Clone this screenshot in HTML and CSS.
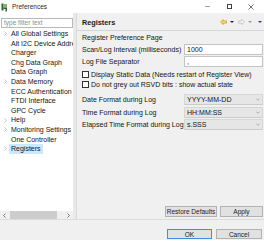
FILE: index.html
```html
<!DOCTYPE html>
<html>
<head>
<meta charset="utf-8">
<title>Preferences</title>
<link rel="stylesheet" href="styles.css">
</head>
<body>
<div class="window">
  <div class="titlebar">
    <svg class="app-icon" viewBox="0 0 7 9" width="7" height="9">
      <rect x="0.5" y="0.5" width="2" height="7" fill="#2e5e46"/>
      <rect x="2.5" y="1" width="3.5" height="3.5" fill="#86b852"/>
      <path d="M2.5 4.5 L6 4.5 L6 8.5 L4.5 8.5 L4.5 6 L2.5 6 Z" fill="#2e5e46"/>
    </svg>
    <span class="title">Preferences</span>
    <div class="controls">
      <span class="ctl"><span class="min"></span></span>
      <span class="ctl"><span class="max"></span></span>
      <span class="ctl">
        <svg viewBox="0 0 6 6" width="6" height="6"><path d="M0.5 0.5 L5.5 5.5 M5.5 0.5 L0.5 5.5" stroke="#333" stroke-width="0.7"/></svg>
      </span>
    </div>
  </div>

  <div class="main">
    <div class="left">
      <div class="filter">type filter text</div>
      <ul class="tree">
        <li><span class="exp"><svg viewBox="0 0 3 5" width="3" height="5"><path d="M0.5 0.5 L2.5 2.5 L0.5 4.5" fill="none" stroke="#a6a6a6" stroke-width="0.7"/></svg></span><span class="label">All Global Settings</span></li>
        <li><span class="exp"></span><span class="label">Alt I2C Device Address</span></li>
        <li><span class="exp"></span><span class="label">Charger</span></li>
        <li><span class="exp"></span><span class="label">Chg Data Graph</span></li>
        <li><span class="exp"></span><span class="label">Data Graph</span></li>
        <li><span class="exp"><svg viewBox="0 0 3 5" width="3" height="5"><path d="M0.5 0.5 L2.5 2.5 L0.5 4.5" fill="none" stroke="#a6a6a6" stroke-width="0.7"/></svg></span><span class="label">Data Memory</span></li>
        <li><span class="exp"></span><span class="label">ECC Authentication</span></li>
        <li><span class="exp"></span><span class="label">FTDI Interface</span></li>
        <li><span class="exp"></span><span class="label">GPC Cycle</span></li>
        <li><span class="exp"><svg viewBox="0 0 3 5" width="3" height="5"><path d="M0.5 0.5 L2.5 2.5 L0.5 4.5" fill="none" stroke="#a6a6a6" stroke-width="0.7"/></svg></span><span class="label">Help</span></li>
        <li><span class="exp"><svg viewBox="0 0 3 5" width="3" height="5"><path d="M0.5 0.5 L2.5 2.5 L0.5 4.5" fill="none" stroke="#a6a6a6" stroke-width="0.7"/></svg></span><span class="label">Monitoring Settings</span></li>
        <li><span class="exp"></span><span class="label">One Controller</span></li>
        <li><span class="exp"><svg viewBox="0 0 3 5" width="3" height="5"><path d="M0.5 0.5 L2.5 2.5 L0.5 4.5" fill="none" stroke="#a6a6a6" stroke-width="0.7"/></svg></span><span class="label selected">Registers</span></li>
      </ul>
      <div class="hscroll">
        <span class="sarrow"><svg viewBox="0 0 3 5" width="3" height="5"><path d="M2.5 0.5 L0.5 2.5 L2.5 4.5" fill="none" stroke="#606060" stroke-width="0.8"/></svg></span>
        <div class="track"><div class="thumb"></div></div>
        <span class="sarrow"><svg viewBox="0 0 3 5" width="3" height="5"><path d="M0.5 0.5 L2.5 2.5 L0.5 4.5" fill="none" stroke="#606060" stroke-width="0.8"/></svg></span>
      </div>
    </div>
    <div class="sash"></div>
    <div class="right">
      <div class="header">
        <span class="htitle">Registers</span>
        <div class="nav">
          <svg viewBox="0 0 7 6" width="7" height="6"><polygon points="0.5,3 3.3,0.5 3.3,1.9 6.5,1.9 6.5,4.1 3.3,4.1 3.3,5.5" fill="#fbd964" stroke="#cf9a17" stroke-width="0.7"/></svg>
          <svg class="drop" viewBox="0 0 4 2" width="4" height="2"><polygon points="0,0 4,0 2,2" fill="#222"/></svg>
          <svg viewBox="0 0 7 6" width="7" height="6"><polygon points="6.5,3 3.7,0.5 3.7,1.9 0.5,1.9 0.5,4.1 3.7,4.1 3.7,5.5" fill="#fafafa" stroke="#b5b5b5" stroke-width="0.7"/></svg>
          <svg class="drop" viewBox="0 0 4 2" width="4" height="2"><polygon points="0,0 4,0 2,2" fill="#9a9a9a"/></svg>
          <svg class="drop menu" viewBox="0 0 4 2" width="4" height="2"><polygon points="0,0 4,0 2,2" fill="#4b2a86"/></svg>
        </div>
      </div>
      <div class="content">
        <div class="desc">Register Preference Page</div>
        <div class="row r-scan"><span class="lbl">Scan/Log Interval (milliseconds)</span><div class="text">1000</div></div>
        <div class="row r-sep"><span class="lbl">Log File Separator</span><div class="text">,</div></div>
        <div class="check c-first"><span class="box"></span><span>Display Static Data (Needs restart of Register View)</span></div>
        <div class="check"><span class="box"></span><span>Do not grey out RSVD bits : show actual state</span></div>
        <div class="row r-combo first-combo"><span class="lbl">Date Format during Log</span><div class="combo"><span>YYYY-MM-DD</span><svg viewBox="0 0 4 2.5" width="4" height="3"><path d="M0.3 0.3 L2 2 L3.7 0.3" fill="none" stroke="#8a8a8a" stroke-width="0.6"/></svg></div></div>
        <div class="row r-combo"><span class="lbl">Time Format during Log</span><div class="combo"><span>HH:MM:SS</span><svg viewBox="0 0 4 2.5" width="4" height="3"><path d="M0.3 0.3 L2 2 L3.7 0.3" fill="none" stroke="#8a8a8a" stroke-width="0.6"/></svg></div></div>
        <div class="row r-combo"><span class="lbl">Elapsed Time Format during Log</span><div class="combo"><span>s.SSS</span><svg viewBox="0 0 4 2.5" width="4" height="3"><path d="M0.3 0.3 L2 2 L3.7 0.3" fill="none" stroke="#8a8a8a" stroke-width="0.6"/></svg></div></div>
      </div>
      <div class="page-buttons">
        <button class="btn restore">Restore Defaults</button>
        <button class="btn apply">Apply</button>
      </div>
    </div>
  </div>

  <div class="footer">
    <button class="btn ok">OK</button>
    <button class="btn cancel">Cancel</button>
  </div>
</div>
</body>
</html>
```

FILE: styles.css
```css
* { box-sizing: border-box; margin: 0; padding: 0; }

html, body {
  width: 264px;
  height: 240px;
  overflow: hidden;
}

body {
  font-family: "Liberation Sans", Arial, sans-serif;
  font-size: 7px;
  color: #141414;
  background: #f0f0f0;
}

.window {
  width: 264px;
  height: 240px;
  display: flex;
  flex-direction: column;
}

/* title bar */
.titlebar {
  height: 13px;
  flex: none;
  background: #ffffff;
  display: flex;
  align-items: center;
  padding-left: 1px;
}
.app-icon { display: block; margin-right: 4px; margin-top: 1px; }
.title { font-size: 6.5px; color: #2a2a2a; }
.controls {
  margin-left: auto;
  display: flex;
  height: 13px;
  padding-right: 2px;
}
.ctl {
  width: 22px;
  height: 13px;
  display: flex;
  align-items: center;
  justify-content: center;
}
.min { display: block; width: 5px; height: 1px; background: #a0a0a0; }
.max { display: block; width: 5px; height: 5px; border: 0.8px solid #444; }

/* main area */
.main {
  height: 206px;
  flex: none;
  display: flex;
}

.left {
  width: 73px;
  background: #ffffff;
  display: flex;
  flex-direction: column;
}
.filter {
  margin: 5px 0 0 1px;
  width: 72px;
  height: 10px;
  border: 1px solid #b9b9b9;
  padding-left: 2px;
  font-size: 6.5px;
  line-height: 8px;
  color: #8d8d8d;
  white-space: nowrap;
  overflow: hidden;
}
.tree {
  list-style: none;
  margin-top: 1px;
}
.tree li {
  height: 9.6px;
  line-height: 9.6px;
  display: flex;
  align-items: center;
  white-space: nowrap;
  overflow: hidden;
}
.exp {
  width: 11px;
  flex: none;
  display: flex;
  padding-left: 4px;
  align-items: center;
}
.exp svg { display: block; }
.label { padding: 0 2px; margin-left: -2px; }
.label.selected { background: #cce8ff; }

.hscroll {
  margin-top: auto;
  height: 8px;
  display: flex;
  align-items: center;
  background: #f0f0f0;
}
.sarrow {
  width: 9px;
  height: 8px;
  flex: none;
  display: flex;
  align-items: center;
  justify-content: center;
}
.sarrow svg { display: block; }
.track { flex: 1; height: 8px; }
.thumb { margin-left: 1px; width: 47px; height: 8px; background: #cdcdcd; }

.sash {
  width: 3px;
  flex: none;
  background: #e9e9e9;
}

.right {
  flex: 1;
  display: flex;
  flex-direction: column;
  border-left: 1px solid #dadada;
}

.header {
  margin-top: 2px;
  height: 16px;
  flex: none;
  display: flex;
  align-items: center;
  padding-left: 5px;
  border-bottom: 1px solid #d5d5d5;
}
.htitle { font-weight: bold; font-size: 7.3px; color: #1a1a1a; }
.nav {
  margin-left: auto;
  display: flex;
  align-items: center;
  padding-right: 2px;
  margin-top: -2px;
}
.nav svg { display: block; }
.nav .drop { margin: 1px 4px 0 3px; }
.nav .menu { margin-left: 2px; margin-right: 0; }

.content {
  padding-left: 5px;
  padding-right: 1px;
}
.desc {
  margin-top: 1px;
  height: 11px;
  line-height: 11px;
}
.row {
  display: flex;
  align-items: center;
  height: 11px;
}
.r-scan { margin-top: 1px; }
.r-sep { margin-top: 1px; }
.lbl {
  width: 102px;
  flex: none;
  white-space: nowrap;
}
.text {
  flex: 1;
  height: 11px;
  background: #ffffff;
  border: 1px solid #c4c4c4;
  padding-left: 2px;
  line-height: 9px;
}
.check {
  display: flex;
  align-items: center;
  height: 10px;
  white-space: nowrap;
}
.c-first { margin-top: 2px; }
.box {
  width: 7px;
  height: 7px;
  border: 0.8px solid #333;
  background: #fff;
  margin-right: 2px;
  flex: none;
}
.r-combo { height: 11px; margin-bottom: 1.5px; }
.first-combo { margin-top: 5px; }
.combo {
  flex: 1;
  height: 11px;
  background: #e6e6e6;
  border: 1px solid #d6d6d6;
  border-bottom-color: #cbcbcb;
  padding: 0 2px;
  display: flex;
  align-items: center;
  justify-content: space-between;
}
.combo svg { display: block; }

.page-buttons {
  margin-top: auto;
  display: flex;
  justify-content: flex-end;
  gap: 3px;
  padding: 0 1px 2px 0;
}

.btn {
  font-family: "Liberation Sans", Arial, sans-serif;
  font-size: 6.5px;
  color: #222;
  background: #e1e1e1;
  border: 1px solid #b2b2b2;
  height: 11px;
  line-height: 9px;
}
.restore { width: 52px; }
.apply { width: 43px; }

.footer {
  flex: 1;
  border-top: 1px solid #dcdcdc;
  display: flex;
  justify-content: flex-end;
  gap: 4px;
  padding: 9px 2px 0 0;
}
.footer .btn { height: 10px; }
.ok { width: 45px; border-color: #3c8fd8; }
.cancel { width: 46px; }
```
